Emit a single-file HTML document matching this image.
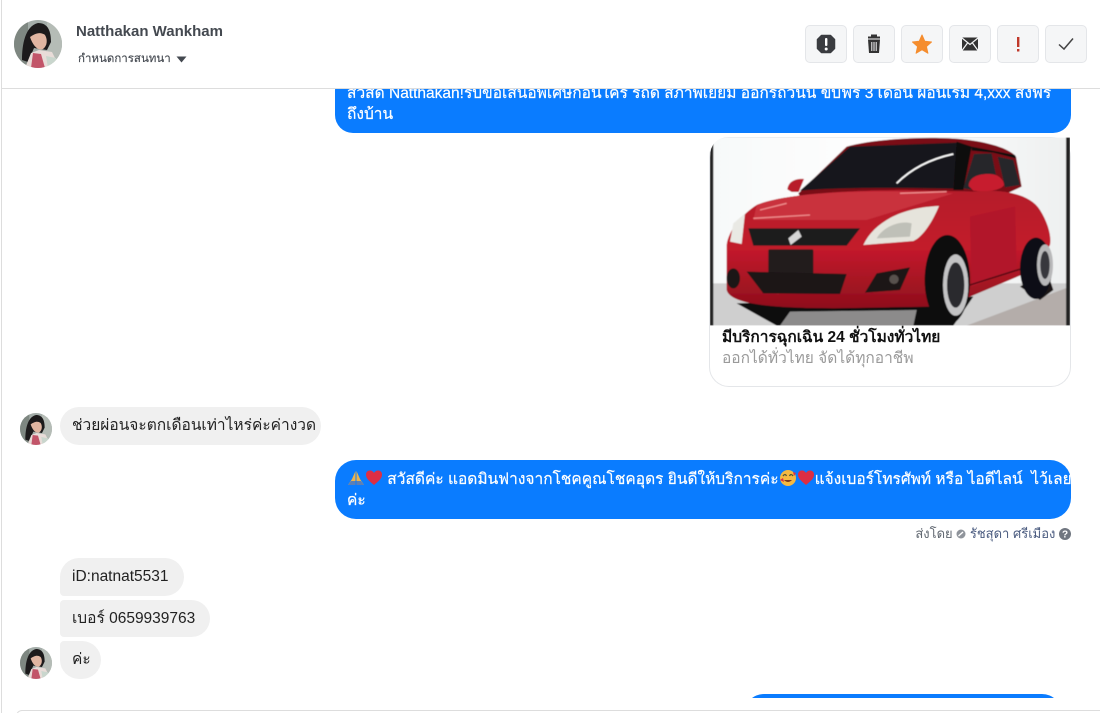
<!DOCTYPE html>
<html><head><meta charset="utf-8">
<style>
html,body{margin:0;padding:0;background:#fff}
#p{position:relative;width:1100px;height:713px;overflow:hidden;background:#fff;font-family:"Liberation Sans","Noto Sans CJK SC",sans-serif;color:#1c1e21}
.a{position:absolute;white-space:nowrap}
.btn{position:absolute;top:25px;width:40px;height:36px;background:#f5f6f7;border:1px solid #e4e6e9;border-radius:5px}
.btn svg{position:absolute;left:0;top:0}
.blue{background:#0a7cff;color:#fff;font-size:15.5px;line-height:21px;-webkit-text-stroke:.2px #fff}
.grey{position:absolute;left:60px;background:#f0f0f0;font-size:15.5px;white-space:nowrap;color:#222}
svg.e{display:inline-block;vertical-align:-3px}
</style></head><body>
<div id="p">
<svg width="0" height="0" style="position:absolute"><defs>
<clipPath id="av"><circle cx="24" cy="24" r="24"/></clipPath>
<g id="avatar"><g clip-path="url(#av)">
<rect width="48" height="48" fill="#a3aca8"/><rect width="14" height="48" fill="#7e8781"/>
<path d="M33 0H48V48H33Z" fill="#b5bcb6"/>
<path d="M8 40C8 25 11 6 24 3C34 3 37 11 37 22L33 30L20 28L14 42Z" fill="#1c1a1b"/>
<path d="M16 17C20 14 26 11 31 15C34 20 33 26 29 29C24 31 19 26 16 17Z" fill="#e0b5a1"/>
<path d="M11 48L17 33L25 30L38 32L46 48Z" fill="#e8dcd8"/>
<path d="M17 48L19 33L27 34L31 48Z" fill="#c25569"/>
<path d="M32 36L42 38L44 48H34Z" fill="#c9d6cd"/>
</g></g>
<path id="heart" d="M9 16C3 11 1 9 1 5.500C1 2.800 3 1.500 5 1.500C6.800 1.500 8.200 2.500 9 4C9.800 2.500 11.200 1.500 13 1.500C15 1.500 17 2.800 17 5.500C17 9 15 11 9 16Z" fill="#dd2e44"/>
</defs></svg>

<!-- frame -->
<div class="a" style="left:1px;top:0;width:1px;height:713px;background:#ddd"></div>

<!-- messages -->
<div class="a blue" style="left:335px;top:72px;width:712px;height:61px;padding:0 12px;border-radius:18px;white-space:normal"><div style="padding-top:11px">สวัสดี Natthakan!รับข้อเสนอพิเศษก่อนใคร รถดี สภาพเยี่ยม ออกรถวันนี้ ขับฟรี 3 เดือน ผ่อนเริ่ม 4,xxx ส่งฟรีถึงบ้าน</div></div>

<!-- card -->
<div class="a" style="left:709px;top:137px;width:360px;height:248px;border:1px solid #e4e6e9;border-radius:20px;background:#fff"></div>
<svg class="a" style="left:700px;top:130px" width="380" height="265" viewBox="0 0 1140 795">
<defs>
<clipPath id="cimg"><path d="M30 82Q30 22 90 22H1110V587H30Z"/></clipPath>
<linearGradient id="bg" x1="0" x2="1" y1="0" y2="0"><stop offset="0" stop-color="#f7f9f9"/><stop offset=".5" stop-color="#fff"/><stop offset="1" stop-color="#eef0f0"/></linearGradient>
<linearGradient id="red" x1="0" x2="0" y1="0" y2="1"><stop offset="0" stop-color="#b51a2a"/><stop offset=".5" stop-color="#c31a2c"/><stop offset="1" stop-color="#8e0f1c"/></linearGradient>
<filter id="b"><feGaussianBlur stdDeviation="1.500"/></filter>
</defs>
<g clip-path="url(#cimg)"><g filter="url(#b)">
<rect x="30" y="22" width="1080" height="565" fill="url(#bg)"/>
<rect x="30" y="460" width="1080" height="127" fill="#cfcfcf"/>
<path d="M800 587L1110 470V587Z" fill="#b4adaa"/>
<rect x="30" y="22" width="10" height="565" fill="#222"/>
<rect x="1098" y="22" width="12" height="565" fill="#222"/>
<path d="M110 520L230 587H760L820 500Z" fill="#111"/>
<path d="M240 587L270 545L650 540L640 587Z" fill="#8c8b8b"/>
<path d="M960 470L1020 510L1060 480L1040 420Z" fill="#1b1718"/>
<path d="M295 190L440 50C520 25 700 18 790 28C860 35 930 55 948 80L965 170L900 200H300Z" fill="#7a1019"/>
<path d="M300 182L450 50L772 38L760 176C600 172 400 172 300 182Z" fill="#17181b"/>
<path d="M590 160C640 110 700 85 760 72" stroke="#fff" stroke-width="5" fill="none"/>
<path d="M770 35L815 50L790 180H760Z" fill="#0c0c0e"/>
<path d="M790 175L822 72L875 70L892 155L810 178Z" fill="#25262a"/>
<path d="M893 80L940 90L960 165L915 172Z" fill="#26272b"/>
<path d="M815 50L945 75L948 85L880 68L815 62Z" fill="#111"/>
<path d="M80 345C85 300 130 250 170 225C240 195 420 180 620 180L820 185C900 175 990 190 1020 240C1045 280 1055 320 1050 345L1000 420L810 500L700 530L400 535C200 535 90 520 80 480Z" fill="url(#red)"/>
<path d="M170 225C240 195 420 180 620 185L760 190L500 270L160 270Z" fill="#c9313d"/>
<path d="M810 260L945 230L950 420L815 470Z" fill="#b2182a"/>
<path d="M810 465L1000 405" stroke="#5c0d15" stroke-width="5" fill="none"/>
<path d="M160 265L330 255M600 190L740 185M180 240L260 220" stroke="#ef8c8c" stroke-width="4" fill="none"/>
<path d="M806 168C806 145 830 130 870 132C895 132 912 150 912 165C900 185 850 185 820 182Z" fill="#c71c2e"/>
<path d="M262 178C265 155 285 145 312 147L296 186H275Z" fill="#b81f2c"/>
<path d="M490 345C520 280 600 232 717 228C700 270 670 320 640 333Z" fill="#e6e4dc"/>
<path d="M530 325C550 290 600 270 635 280L630 320Z" fill="#bfc0b8"/>
<path d="M90 335L100 280L135 250L125 342Z" fill="#e9e9e4"/>
<path d="M145 295L480 295L440 347L160 347Z" fill="#1a1a1c"/>
<path d="M265 325L295 300L305 320L272 345Z" fill="#d6d6d6"/>
<rect x="205" y="358" width="135" height="74" rx="4" fill="#231b1e"/>
<path d="M140 425L440 432L420 492L190 490Z" fill="#1a1214"/>
<path d="M495 488L530 430L630 412L600 480Z" fill="#1b1315"/>
<ellipse cx="100" cy="445" rx="20" ry="30" fill="#1c1618"/>
<circle cx="582" cy="448" r="14" fill="#59514d"/>
<ellipse cx="742" cy="450" rx="68" ry="135" fill="#0d0d10"/>
<ellipse cx="767" cy="465" rx="38" ry="92" fill="#c3c3c4"/>
<ellipse cx="767" cy="465" rx="26" ry="68" fill="#2a2a2e"/>
<ellipse cx="1008" cy="415" rx="48" ry="92" fill="#111113"/>
<ellipse cx="1035" cy="405" rx="24" ry="62" fill="#b8b8b9"/>
<ellipse cx="1035" cy="405" rx="14" ry="42" fill="#38383c"/>
</g></g>
</svg>
<div class="a" style="left:722px;top:328px;font-size:15.500px;font-weight:bold;color:#111;line-height:20px">มีบริการฉุกเฉิน 24 ชั่วโมงทั่วไทย</div>
<div class="a" style="left:722px;top:349px;font-size:15.500px;color:#9a9a9a;line-height:20px">ออกได้ทั่วไทย จัดได้ทุกอาชีพ</div>

<!-- left 1 -->
<svg class="a" style="left:20px;top:413px" width="32" height="32" viewBox="0 0 48 48"><use href="#avatar"/></svg>
<div class="grey" style="top:407px;height:38px;line-height:38px;padding:0 12px;border-radius:19px;width:237px">ช่วยผ่อนจะตกเดือนเท่าไหร่ค่ะค่างวด</div>

<!-- blue 2 -->
<div class="a blue" style="left:335px;top:460px;width:712px;height:59px;padding:0 12px;border-radius:21px;white-space:nowrap">
<div style="padding-top:9px"><svg class="e" width="18" height="18" viewBox="0 0 18 18"><path d="M8.500 2L5 10L1 16H8.500ZM9.500 2L13 10L17 16H9.500Z" fill="#eeb34a"/><path d="M1 16H8.500V12H4ZM17 16H9.500V12H14Z" fill="#5c7fb5"/></svg><svg class="e" width="18" height="18" viewBox="0 0 18 18"><use href="#heart"/></svg> สวัสดีค่ะ แอดมินฟางจากโชคคูณโชคอุดร ยินดีให้บริการค่ะ<svg class="e" width="18" height="18" viewBox="0 0 18 18"><circle cx="9" cy="9" r="8" fill="#f5b942"/><path d="M4 7Q6 4 7.500 7M10.500 7Q12 4 14 7" stroke="#553" stroke-width="1.300" fill="none"/><path d="M5 11Q9 15 13 11Z" fill="#7a3a20"/><path d="M1 11L4 9L5 13ZM14 3L17 4L15 7Z" fill="#dd2e44"/></svg><svg class="e" width="18" height="18" viewBox="0 0 18 18"><use href="#heart"/></svg>แจ้งเบอร์โทรศัพท์ หรือ ไอดีไลน์&nbsp; ไว้เลย</div>
<div>ค่ะ</div></div>

<!-- sent by -->
<div class="a" style="right:29px;top:525px;font-size:13px;line-height:18px;color:#606770">ส่งโดย <svg class="e" style="vertical-align:-1px" width="10" height="10" viewBox="0 0 10 10"><circle cx="5" cy="5" r="4.500" fill="#8f949b"/><path d="M2.500 7L7 3" stroke="#fff" stroke-width="1.400"/></svg> <span style="color:#4b5c80">รัชสุดา ศรีเมือง</span> <svg class="e" style="vertical-align:-1.500px" width="12" height="12" viewBox="0 0 12 12"><circle cx="6" cy="6" r="6" fill="#707680"/><text x="6" y="9.500" text-anchor="middle" font-size="10" font-weight="bold" fill="#fff" font-family="Liberation Sans">?</text></svg></div>

<!-- left group -->
<div class="grey" style="top:558px;height:38px;line-height:38px;padding:0 12px;border-radius:19px 19px 19px 4px;width:100px;font-family:'Liberation Sans',sans-serif">iD:natnat5531</div>
<div class="grey" style="top:600px;height:37px;line-height:37px;padding:0 12px;border-radius:4px 19px 19px 4px;width:126px">เบอร์ 0659939763</div>
<svg class="a" style="left:20px;top:647px" width="32" height="32" viewBox="0 0 48 48"><use href="#avatar"/></svg>
<div class="grey" style="top:641px;height:38px;line-height:38px;padding:0 12px;border-radius:4px 19px 19px 19px;width:17px">ค่ะ</div>

<!-- bottom -->
<div class="a" style="left:744px;top:694px;width:318px;height:4px;overflow:hidden"><div style="height:40px;background:#0a7cff;border-radius:20px"></div></div>
<div class="a" style="left:16px;top:710px;width:1100px;height:20px;border:1px solid #ddd;border-radius:6px;box-sizing:border-box"></div>

<!-- header -->
<div class="a" style="left:2px;top:0;width:1098px;height:88px;background:#fff;border-bottom:1px solid #ddd"></div>
<svg class="a" style="left:14px;top:20px" width="48" height="48" viewBox="0 0 48 48"><use href="#avatar"/></svg>
<div class="a" style="left:76px;top:22px;font-size:15px;font-weight:bold;color:#444950;line-height:20px;-webkit-text-stroke:0">Natthakan Wankham</div>
<div class="a" style="left:78px;top:50px;font-size:11.500px;color:#444950;line-height:18px;-webkit-text-stroke:.15px #444950">กำหนดการสนทนา</div>
<svg class="a" style="left:176px;top:56px" width="11" height="7" viewBox="0 0 11 7"><path d="M0.500 0.500H10.500L5.500 6.500Z" fill="#444950"/></svg>

<div class="btn" style="left:805px"><svg width="40" height="36" viewBox="0 0 40 36"><path d="M15.500 10.500H24.500L28.500 14.500V23.500L24.500 27.500H15.500L11.500 23.500V14.500Z" fill="#3a3c40" stroke="#3a3c40" stroke-width="1.500" stroke-linejoin="round" transform="translate(0 -1)"/><rect x="19" y="12" width="2.400" height="8" rx="1" fill="#fff"/><circle cx="20.200" cy="23" r="1.500" fill="#fff"/></svg></div>
<div class="btn" style="left:853px"><svg width="40" height="36" viewBox="0 0 40 36"><path d="M14 11.500H26M18 11V9.500H22V11" stroke="#333" stroke-width="2" fill="none"/><path d="M14 13.500H26L25 27H15Z" fill="#333"/><path d="M17.800 16V25M20 16V25M22.200 16V25" stroke="#f5f6f7" stroke-width="1"/></svg></div>
<div class="btn" style="left:901px"><svg width="40" height="36" viewBox="0 0 40 36"><path d="M20 9L22.800 15.300L29.500 16L24.400 20.500L25.900 27.200L20 23.700L14.100 27.200L15.600 20.500L10.500 16L17.200 15.300Z" fill="#f58d2e" stroke="#f58d2e" stroke-linejoin="round"/></svg></div>
<div class="btn" style="left:949px"><svg width="40" height="36" viewBox="0 0 40 36"><rect x="12" y="11.500" width="16" height="13" rx="1" fill="#333"/><path d="M12 12L20 18.500L28 12M12 24.500L17.500 17M28 24.500L22.500 17" stroke="#f5f6f7" stroke-width="1.200" fill="none"/></svg></div>
<div class="btn" style="left:997px"><svg width="40" height="36" viewBox="0 0 40 36"><rect x="19" y="11" width="2.400" height="10" fill="#c0392b"/><rect x="19" y="23" width="2.400" height="2.500" fill="#c0392b"/></svg></div>
<div class="btn" style="left:1045px"><svg width="40" height="36" viewBox="0 0 40 36"><path d="M13 18.500L18 23L27 12.500" stroke="#444" stroke-width="1.500" fill="none"/></svg></div>
</div>
</body></html>
